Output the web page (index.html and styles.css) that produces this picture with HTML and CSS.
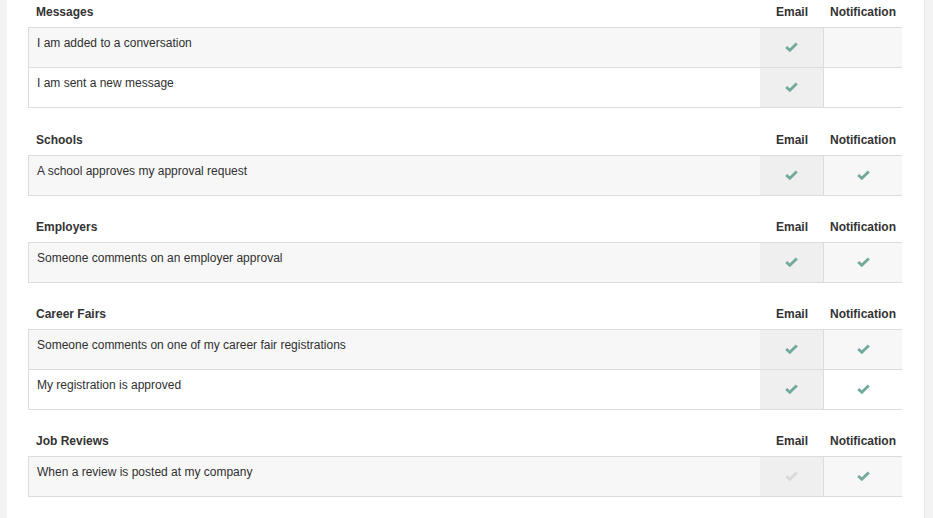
FILE: index.html
```html
<!DOCTYPE html>
<html>
<head>
<meta charset="utf-8">
<link rel="stylesheet" href="styles.css">
</head>
<body>
<svg width="0" height="0" class="defs">
  <defs>
    <symbol id="check" viewBox="0 0 13 10">
      <polyline points="1.2,5 4.8,8.3 11.8,1.4" fill="none" stroke="currentColor" stroke-width="2.8" stroke-linecap="butt" stroke-linejoin="miter"/>
    </symbol>
  </defs>
</svg>
<div class="panel">
  <section class="group">
    <div class="head">
      <div class="title">Messages</div>
      <div class="col">Email</div>
      <div class="col">Notification</div>
    </div>
    <div class="table">
      <div class="row">
        <div class="label">I am added to a conversation</div>
        <div class="cell email"><svg class="chk on"><use href="#check"/></svg></div>
        <div class="cell notif"></div>
      </div>
      <div class="row">
        <div class="label">I am sent a new message</div>
        <div class="cell email"><svg class="chk on"><use href="#check"/></svg></div>
        <div class="cell notif"></div>
      </div>
    </div>
  </section>

  <section class="group">
    <div class="head">
      <div class="title">Schools</div>
      <div class="col">Email</div>
      <div class="col">Notification</div>
    </div>
    <div class="table">
      <div class="row">
        <div class="label">A school approves my approval request</div>
        <div class="cell email"><svg class="chk on"><use href="#check"/></svg></div>
        <div class="cell notif"><svg class="chk on"><use href="#check"/></svg></div>
      </div>
    </div>
  </section>

  <section class="group">
    <div class="head">
      <div class="title">Employers</div>
      <div class="col">Email</div>
      <div class="col">Notification</div>
    </div>
    <div class="table">
      <div class="row">
        <div class="label">Someone comments on an employer approval</div>
        <div class="cell email"><svg class="chk on"><use href="#check"/></svg></div>
        <div class="cell notif"><svg class="chk on"><use href="#check"/></svg></div>
      </div>
    </div>
  </section>

  <section class="group">
    <div class="head">
      <div class="title">Career Fairs</div>
      <div class="col">Email</div>
      <div class="col">Notification</div>
    </div>
    <div class="table">
      <div class="row">
        <div class="label">Someone comments on one of my career fair registrations</div>
        <div class="cell email"><svg class="chk on"><use href="#check"/></svg></div>
        <div class="cell notif"><svg class="chk on"><use href="#check"/></svg></div>
      </div>
      <div class="row">
        <div class="label">My registration is approved</div>
        <div class="cell email"><svg class="chk on"><use href="#check"/></svg></div>
        <div class="cell notif"><svg class="chk on"><use href="#check"/></svg></div>
      </div>
    </div>
  </section>

  <section class="group">
    <div class="head">
      <div class="title">Job Reviews</div>
      <div class="col">Email</div>
      <div class="col">Notification</div>
    </div>
    <div class="table">
      <div class="row">
        <div class="label">When a review is posted at my company</div>
        <div class="cell email"><svg class="chk off"><use href="#check"/></svg></div>
        <div class="cell notif"><svg class="chk on"><use href="#check"/></svg></div>
      </div>
    </div>
  </section>
</div>
</body>
</html>
```

FILE: styles.css
```css
html, body {
  margin: 0;
  padding: 0;
}
body {
  background: #f3f3f3;
  font-family: "Liberation Sans", Arial, sans-serif;
  color: #2f2f2f;
  font-size: 12px;
  height: 518px;
  overflow: hidden;
}
.defs {
  position: absolute;
  width: 0;
  height: 0;
}
.panel {
  margin-left: 7px;
  width: 918px;
  min-height: 518px;
  background: #fff;
  border-right: 1px solid #e4e4e4;
  box-sizing: border-box;
  padding: 0 22px 0 21px;
}
.group {
  margin-bottom: 19px;
}
.group:first-child {
  margin-bottom: 20px;
}
.head {
  display: grid;
  grid-template-columns: 1fr 64px 78px;
  height: 27px;
  box-sizing: border-box;
  padding-top: 3px;
  line-height: 18px;
  font-weight: bold;
  color: #333;
}
.title {
  padding-left: 8px;
}
.col {
  text-align: center;
}
.table {
  border-top: 1px solid #dcdcdc;
  border-left: 1px solid #dcdcdc;
}
.row {
  display: grid;
  grid-template-columns: 1fr 64px 78px;
  height: 40px;
  box-sizing: border-box;
  border-bottom: 1px solid #dcdcdc;
  background: #fff;
}
.row:nth-child(odd) {
  background: #f7f7f7;
}
.label {
  padding: 6px 8px;
  line-height: 18px;
}
.cell {
  display: flex;
  align-items: center;
  justify-content: center;
  padding-bottom: 2px;
  box-sizing: border-box;
}
.email {
  background: #efefef;
  border-right: 1px solid #dcdcdc;
}
.chk {
  width: 13px;
  height: 10px;
}
.chk.on {
  color: #73a99b;
}
.chk.off {
  color: #d9d9d9;
}
```
